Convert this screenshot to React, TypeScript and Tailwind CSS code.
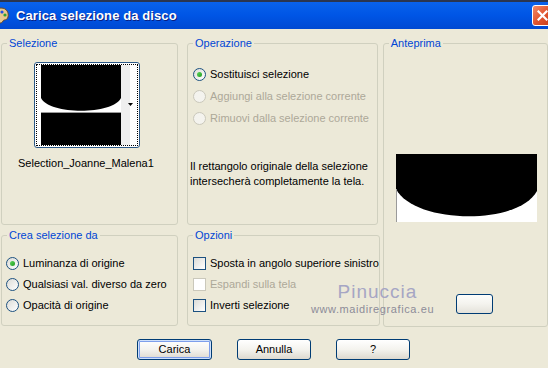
import React from "react";

type RowProps = {
  label: string;
  checked?: boolean;
  disabled?: boolean;
  h?: string;
};

function Radio({ label, checked = false, disabled = false, h = "h-[22px]" }: RowProps) {
  return (
    <div className={`flex items-center gap-[4px] whitespace-nowrap ${h}`}>
      <span
        className={`flex h-[13px] w-[13px] shrink-0 items-center justify-center rounded-full border ${
          disabled
            ? "border-[#CAC8BB] bg-[#F4F3EE]"
            : "border-[#1C5180] bg-gradient-to-br from-[#DCDCD7] to-white"
        }`}
      >
        {checked && (
          <span className="h-[5px] w-[5px] rounded-full bg-gradient-to-br from-[#5CD65C] to-[#1E9C1E]" />
        )}
      </span>
      <span className={disabled ? "text-[#ACA899]" : "text-black"}>{label}</span>
    </div>
  );
}

function Check({ label, disabled = false, h = "h-[21px]" }: RowProps) {
  return (
    <div className={`flex items-center gap-[4px] whitespace-nowrap ${h}`}>
      <span
        className={`h-[13px] w-[13px] shrink-0 border ${
          disabled
            ? "border-[#CAC8BB] bg-white"
            : "border-[#1C5180] bg-gradient-to-br from-[#DCDCD7] to-white"
        }`}
      />
      <span className={disabled ? "text-[#ACA899]" : "text-black"}>{label}</span>
    </div>
  );
}

function XpButton({
  children,
  focused = false,
  className = "",
}: {
  children?: React.ReactNode;
  focused?: boolean;
  className?: string;
}) {
  return (
    <button
      className={`flex items-center justify-center rounded-[3px] border border-[#003C74] bg-gradient-to-b from-white via-[#F4F3EE] to-[#DDD9CF] text-[11px] leading-none text-black ${
        focused ? "shadow-[inset_0_0_0_1px_#CEE0FB,inset_0_0_0_2px_#7E9FEB]" : ""
      } ${className}`}
    >
      {children}
    </button>
  );
}

function Group({
  title,
  className = "",
  children,
}: {
  title: string;
  className?: string;
  children?: React.ReactNode;
}) {
  return (
    <fieldset className={`rounded-[3px] border border-[#D0D0BF] ${className}`}>
      <legend className="ml-[5px] px-[2px] leading-[13px] text-[#0046D5]">{title}</legend>
      {children}
    </fieldset>
  );
}

const App = () => {
  return (
    <div className="relative h-[368px] w-[548px] overflow-hidden bg-[#ECE9D8] font-['Liberation_Sans',Arial,sans-serif] text-[11px]">
      {/* Title bar */}
      <div className="flex h-[29px] items-center border-t-2 border-[#2A3550] bg-gradient-to-b from-[#0A62EC] via-[#0055E5] to-[#0049D2]">
        <svg width="16" height="18" viewBox="0 0 16 18" className="ml-[-7px] shrink-0">
          <path d="M8 1 C14 1 16 6 15 10 C14 14 11 12 10 14 C9 17 3 17 1 13 C-1 8 2 1 8 1 Z" fill="#E8C890" stroke="#6B4A22" strokeWidth="1" />
          <circle cx="5" cy="6" r="1.6" fill="#E03020" />
          <circle cx="9" cy="5" r="1.6" fill="#2050E0" />
          <circle cx="12" cy="8" r="1.6" fill="#30A030" />
          <circle cx="5" cy="11" r="1.6" fill="#F0D020" />
        </svg>
        <span className="ml-[7px] text-[13px] font-bold tracking-[0.1px] text-white [text-shadow:1px_1px_0_#0A1E80]">
          Carica selezione da disco
        </span>
        <div className="ml-auto mr-[-5px] flex h-[21px] w-[21px] items-center justify-center self-center rounded-[3px] border border-white bg-gradient-to-br from-[#F08A68] via-[#E2552F] to-[#C63D18]">
          <svg width="11" height="11" viewBox="0 0 11 11">
            <path d="M1.5 1.5 L9.5 9.5 M9.5 1.5 L1.5 9.5" stroke="white" strokeWidth="2.2" strokeLinecap="square" />
          </svg>
        </div>
      </div>

      {/* Body */}
      <div className="flex pl-[1px] pt-[8px]">
        <div className="flex flex-col gap-[4px]">
          <div className="flex gap-[9px]">
            <Group title="Selezione" className="h-[188px] w-[177px]">
              <div className="ml-[32px] mt-[12px] h-[86px] w-[106px] rounded-[3px] border border-[#2B5886] bg-white p-[1px]">
                <div className="h-full w-full border border-dotted border-black">
                  <svg width="96" height="80" viewBox="0 0 96 80" className="ml-[4px]">
                    <rect x="80" y="0" width="9" height="80" fill="#EFEFEF" />
                    <rect x="0" y="0" width="80" height="80" fill="white" />
                    <path d="M0 0 H80 V33 C72 50 8 50 0 33 Z" fill="black" />
                    <rect x="0" y="47" width="80" height="1" fill="#9A9A9A" />
                    <rect x="0" y="48" width="80" height="32" fill="black" />
                    <path d="M87 38 H92 L89.5 41 Z" fill="black" />
                  </svg>
                </div>
              </div>
              <div className="ml-[16px] mt-[9px] leading-[13px] text-black">Selection_Joanne_Malena1</div>
            </Group>
            <Group title="Operazione" className="h-[188px] w-[191px]">
              <div className="ml-[5px] mt-[13px]">
                <Radio label="Sostituisci selezione" checked />
                <Radio label="Aggiungi alla selezione corrente" disabled />
                <Radio label="Rimuovi dalla selezione corrente" disabled />
              </div>
              <p className="ml-[2px] mt-[30px] leading-[15px] text-black">
                Il rettangolo originale della selezione
                <br />
                intersecherà completamente la tela.
              </p>
            </Group>
          </div>
          <div className="flex gap-[9px]">
            <Group title="Crea selezione da" className="h-[97px] w-[177px]">
              <div className="ml-[4px] mt-[11px]">
                <Radio label="Luminanza di origine" checked h="h-[21px]" />
                <Radio label="Qualsiasi val. diverso da zero" h="h-[21px]" />
                <Radio label="Opacità di origine" h="h-[21px]" />
              </div>
            </Group>
            <Group title="Opzioni" className="h-[97px] w-[191px]">
              <div className="ml-[5px] mt-[11px]">
                <Check label="Sposta in angolo superiore sinistro" />
                <Check label="Espandi sulla tela" disabled />
                <Check label="Inverti selezione" />
              </div>
            </Group>
          </div>
        </div>
        <Group title="Anteprima" className="ml-[3px] h-[290px] w-[168px]">
          <svg width="141" height="68" viewBox="0 0 141 68" className="ml-[12px] mt-[104px]">
            <rect x="0" y="0" width="141" height="68" fill="white" />
            <path d="M0 0 H141 V37 C122 72 18 70 0 35 Z" fill="black" />
            <rect x="0" y="35" width="1" height="33" fill="#9A9A9A" />
          </svg>
          <XpButton className="ml-[72px] mt-[72px] h-[20px] w-[37px] !bg-gradient-to-b !from-[#FDFDFB] !to-[#E4E2DA]" />
        </Group>
      </div>

      {/* Buttons */}
      <div className="mt-[12px] flex">
        <XpButton focused className="ml-[137px] h-[21px] w-[75px]">
          Carica
        </XpButton>
        <XpButton className="ml-[25px] h-[21px] w-[74px]">Annulla</XpButton>
        <XpButton className="ml-[25px] h-[21px] w-[74px]">?</XpButton>
      </div>

      {/* Watermark */}
      <div className="pointer-events-none absolute left-[312px] top-[281px] flex w-[121px] flex-col items-center">
        <span className="ml-[10px] text-[19px] leading-[22px] tracking-[1px] text-[#A6A6C4]">Pinuccia</span>
        <span className="text-[11px] leading-[13px] tracking-[0.6px] text-[#8C8C98]">www.maidiregrafica.eu</span>
      </div>
    </div>
  );
};

export default App;
